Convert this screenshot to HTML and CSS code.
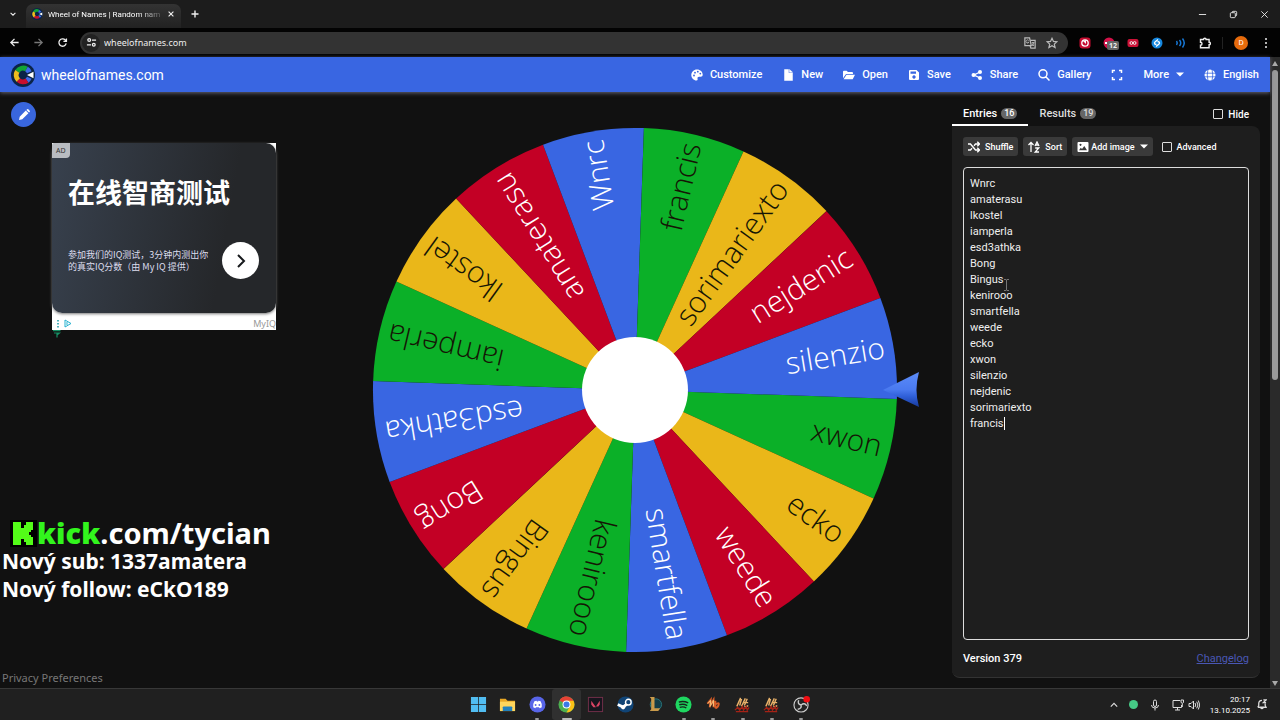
FILE: index.html
```html
<!DOCTYPE html>
<html lang="en">
<head>
<meta charset="utf-8">
<title>Wheel of Names | Random name picker</title>
<link rel="stylesheet" href="styles.css">
</head>
<body>
<svg class="defs" aria-hidden="true">
  <symbol id="logo" viewBox="0 0 24 24">
    <circle cx="12" cy="12" r="12" fill="#0b2447"/>
    <g fill="none" stroke-width="5">
      <path d="M6.300 8.300A6.900 6.900 0 0 1 15.500 6" stroke="#12a537"/>
      <path d="M15.500 6A6.900 6.900 0 0 1 18.300 9.200M18.300 14.800A6.900 6.900 0 0 1 16 17.600" stroke="#3d6be8"/>
      <path d="M16 17.600A6.900 6.900 0 0 1 7.300 17" stroke="#c80f2e"/>
      <path d="M7.300 17A6.900 6.900 0 0 1 6.300 8.300" stroke="#efbd1d"/>
    </g>
    <path d="M16 12l6.500-3.200v6.400z" fill="#fff"/>
  </symbol>
  <symbol id="flame" viewBox="0 0 18 18">
    <path d="M3 11L7 2M6 10L8 3M8 11l4-8.500M11 10l3-7M10 7h5M11 11q2 1 4-1" fill="none" stroke="#e9b26a" stroke-width="1.500"/>
    <path d="M1 15l3-3 2 3 3-4 1 4 3-4 1 4 2-3M2 16.500h13M3 13h10" stroke="#a52216" stroke-width="1.300" fill="none"/>
  </symbol>
</svg>

<header class="tabstrip">
  <button class="plain tab-search" aria-label="Search tabs"><svg viewBox="0 0 10 10" width="8" height="8"><path d="M2 3.500l3 3 3-3" class="line"/></svg></button>
  <div class="tab">
    <svg width="12" height="12"><use href="#logo"/></svg>
    <span class="tab-title">Wheel of Names | Random nam</span>
    <button class="plain" aria-label="Close tab"><svg viewBox="0 0 10 10" width="8" height="8"><path d="M2 2l6 6M8 2l-6 6" class="line"/></svg></button>
  </div>
  <button class="plain new-tab" aria-label="New tab"><svg viewBox="0 0 10 10" width="10" height="10"><path d="M5 1.500v7M1.500 5h7" class="line"/></svg></button>
  <div class="window-controls">
    <button class="plain" aria-label="Minimize"><svg viewBox="0 0 10 10" width="9" height="9"><path d="M1 5h8" class="line thin"/></svg></button>
    <button class="plain" aria-label="Restore"><svg viewBox="0 0 10 10" width="9" height="9"><rect x="1.500" y="3" width="5.500" height="5.500" rx="1" class="line thin"/><path d="M3.500 3V2.500q0-1 1-1h3q1 0 1 1v3q0 1-1 1H7" class="line thin"/></svg></button>
    <button class="plain" aria-label="Close"><svg viewBox="0 0 10 10" width="9" height="9"><path d="M1.500 1.500l7 7M8.500 1.500l-7 7" class="line thin"/></svg></button>
  </div>
</header>

<div class="toolbar">
  <div class="nav-buttons">
    <button class="plain" aria-label="Back"><svg viewBox="0 0 12 12" width="11" height="11"><path d="M10.500 6h-8.500M6 2l-4 4 4 4" class="line"/></svg></button>
    <button class="plain dim" aria-label="Forward"><svg viewBox="0 0 12 12" width="11" height="11"><path d="M1.500 6h8.500M6 2l4 4-4 4" class="line"/></svg></button>
    <button class="plain" aria-label="Reload"><svg viewBox="0 0 12 12" width="11" height="11"><path d="M10 7A4 4 0 1 1 9 3.300L10.200 4.500M10.300 1.500v3.200H7" class="line"/></svg></button>
  </div>
  <div class="address">
    <button class="plain site-info" aria-label="Site information"><svg viewBox="0 0 12 12" width="11" height="11"><circle cx="3.500" cy="3.300" r="1.500" class="line"/><circle cx="8.500" cy="8.500" r="1.500" class="line"/><path d="M6.500 3.300H11M1 8.500h4.500" class="line"/></svg></button>
    <input class="url" aria-label="Address" value="wheelofnames.com">
    <button class="plain dim2" aria-label="Translate"><svg viewBox="0 0 14 14" width="12" height="12"><path d="M1 1h5.500l2 9H1z" class="line"/><path d="M7.500 4H13v9H8l-1-3" class="line"/><path d="M5.500 4a1.800 1.800 0 1 0 .2 2.200H4M9 6.500h3M10.500 6v1M9.500 10.500l2-4M9.500 7.500l2 3" class="line thin"/></svg></button>
    <button class="plain dim2" aria-label="Bookmark"><svg viewBox="0 0 14 14" width="12" height="12"><path d="M7 1.500l1.700 3.700 4 .4-3 2.700.9 4L7 10.200l-3.600 2.100.9-4-3-2.700 4-.4z" class="line"/></svg></button>
  </div>
  <div class="extensions">
    <button class="plain" aria-label="Blocker"><svg viewBox="0 0 12 12" width="12" height="12"><rect x=".5" y=".5" width="11" height="11" rx="3" fill="#c60d31"/><circle cx="6" cy="6" r="3.200" fill="none" stroke="#fff" stroke-width="1.300"/><path d="M4 4l3 3V3z" fill="#fff"/></svg></button>
    <button class="plain badge-host" aria-label="Ad filter"><svg viewBox="0 0 12 12" width="12" height="12"><circle cx="6" cy="6" r="5.500" fill="#d31148"/><path d="M2 6h8" stroke="#fff" stroke-width="2" stroke-dasharray="2 1"/></svg><span class="badge">12</span></button>
    <button class="plain" aria-label="Recorder"><svg viewBox="0 0 12 12" width="12" height="12"><rect x=".5" y="2" width="11" height="8" rx="2" fill="#cc1237"/><circle cx="4.400" cy="6" r="1.400" class="line thin"/><circle cx="7.600" cy="6" r="1.400" class="line thin"/></svg></button>
    <button class="plain" aria-label="Shazam"><svg viewBox="0 0 12 12" width="12" height="12"><circle cx="6" cy="6" r="5.500" fill="#1688df"/><path d="M7 2.500L4 5a1.200 1.200 0 0 0 1.500 2M5 9.500L8 7a1.200 1.200 0 0 0-1.500-2" fill="none" stroke="#fff" stroke-width="1.300"/></svg></button>
    <button class="plain" aria-label="Volume"><svg viewBox="0 0 12 12" width="12" height="12"><path d="M1.500 4q1.500 2 0 4M4.500 3q2.500 3 0 6M7.500 1.500q3.500 4.500 0 9" fill="none" stroke="#1778d6" stroke-width="1.500"/></svg></button>
    <button class="plain" aria-label="Extensions"><svg viewBox="0 0 12 12" width="12" height="12"><path d="M1.500 2.500h3a1.300 1.300 0 0 1 2.600 0h3v2.700a1.300 1.300 0 0 1 0 2.600v3H1.500V8.200a1.500 1.500 0 0 0 0-3z" class="line"/></svg></button>
  </div>
  <button class="avatar" aria-label="Profile">D</button>
  <button class="plain" aria-label="Menu"><svg viewBox="0 0 4 12" width="4" height="12" fill="#eee"><circle cx="2" cy="2" r="1"/><circle cx="2" cy="6" r="1"/><circle cx="2" cy="10" r="1"/></svg></button>
</div>

<div class="viewport">
  <div class="site">
    <header class="site-header">
      <a class="brand" href="#"><svg width="24" height="24"><use href="#logo"/></svg>wheelofnames.com</a>
      <nav class="menu">
        <button><svg viewBox="0 0 12 12" width="12" height="12"><path d="M6 .5C2.700.5.300 3 .3 6S2.800 11.500 5.500 11.500c1.500 0 1.200-1.200 1-2-.2-1 .5-1.700 1.500-1.700h1.700c1.300 0 2-.9 2-2C11.700 2.800 9.300.5 6 .5z" fill="#fff"/><g fill="#3764df"><circle cx="3" cy="6.500" r=".9"/><circle cx="4" cy="3.700" r=".9"/><circle cx="6.800" cy="2.700" r=".9"/><circle cx="9.300" cy="4.600" r=".9"/></g></svg>Customize</button>
        <button><svg viewBox="0 0 12 12" width="12" height="12"><path d="M2.500.500h4V4H10.500v7.500h-8zM7.500.500l3 2.700h-3z" fill="#fff" stroke="#fff" stroke-width=".5"/></svg>New</button>
        <button><svg viewBox="0 0 13 12" width="12" height="12"><path d="M0 9.500V2.500Q0 1.500 1 1.500h3l1.300 1.300h4.500q1 0 1 1V5H3.300zM.6 10.500L3.800 5.800H13L10.500 10.500z" fill="#fff"/></svg>Open</button>
        <button><svg viewBox="0 0 12 12" width="12" height="12"><path fill-rule="evenodd" d="M2 1h6.500L11 3.500V10q0 1-1 1H2q-1 0-1-1V2q0-1 1-1zM2.500 2.500v2.300h5.500V2.500zM6 6.300a1.700 1.700 0 1 0 .01 0z" fill="#fff"/></svg>Save</button>
        <button><svg viewBox="0 0 12 12" width="12" height="12" fill="#fff"><path d="M9 3L3 6l6 3" fill="none" stroke="#fff" stroke-width="1.300"/><circle cx="2.600" cy="6" r="2.100"/><circle cx="9" cy="2.900" r="2"/><circle cx="9" cy="9.100" r="2"/></svg>Share</button>
        <button><svg viewBox="0 0 12 12" width="12" height="12"><path d="M7.800 7.800l3.700 3.700M9 4.800a4 4 0 1 1-8 0 4 4 0 0 1 8 0z" fill="none" stroke="#fff" stroke-width="1.500"/></svg>Gallery</button>
        <button aria-label="Fullscreen"><svg viewBox="0 0 12 12" width="12" height="12"><path d="M1.500 4V1.500H4M8 1.500h2.500V4M10.500 8v2.500H8M4 10.500H1.500V8" fill="none" stroke="#fff" stroke-width="1.500"/></svg></button>
        <button>More<svg viewBox="0 0 8 5" width="8" height="5"><path d="M0 .5h8L4 4.500z" fill="#fff"/></svg></button>
        <button><svg viewBox="0 0 12 12" width="12" height="12"><circle cx="6" cy="6" r="5.500" fill="#fff"/><path d="M0 4.200h12M0 7.800h12M4 0q-1.500 6 0 12M8 0q1.500 6 0 12" fill="none" stroke="#3764df" stroke-width=".8"/></svg>English</button>
      </nav>
    </header>

    <main class="content">
      <aside class="left">
        <button class="edit" aria-label="Edit title"><svg viewBox="0 0 14 14" width="14" height="14"><path d="M2 12l.7-3.300L8.800 2.600l2.600 2.600-6.100 6.100zM9.400 2l.7-.7q.6-.5 1.200 0l1.400 1.400q.5.600 0 1.200l-.7.700z" fill="#fff"/></svg></button>
        <section class="ad">
          <div class="ad-card">
            <span class="ad-label">AD</span>
            <h2>在线智商测试</h2>
            <div class="ad-row">
              <p>参加我们的IQ测试，3分钟内测出你<br>的真实IQ分数（由 My IQ 提供）</p>
              <button class="ad-go" aria-label="Open ad"><svg viewBox="0 0 16 16" width="16" height="18"><path d="M5 2l6 6-6 6" fill="none" stroke="#17191c" stroke-width="2"/></svg></button>
            </div>
          </div>
          <div class="ad-foot">
            <svg viewBox="0 0 18 9" width="18" height="9"><path d="M2 1v1.500M2 4v1.500M2 7v1.500" stroke="#159ba8" stroke-width="1.500"/><path d="M9 1v7l6-3.500zM11 3v3" fill="none" stroke="#25b1cf"/></svg>
            <span>MyIQ</span>
          </div>
          <svg class="ad-mark" viewBox="0 0 8 8" width="8" height="8"><path d="M0 .7h7.500M1 3h5.500L4 5M4 3v4.500" fill="none" stroke="#159064" stroke-width="1.200"/></svg>
        </section>
        <a class="privacy" href="#">Privacy Preferences</a>
      </aside>

      <section class="stage">
        <svg class="wheel" viewBox="-290 -265 580 530" role="img" aria-label="Wheel">
          <defs>
            <path id="slice" d="M0 0L257 -51.100A262 262 0 0 1 257 51.100Z"/>
            <linearGradient id="arrow" x1="0" y1="0" x2="0" y2="1"><stop offset="0" stop-color="#5c8cf8"/><stop offset=".5" stop-color="#4a7af0"/><stop offset=".7" stop-color="#2f5fd8"/><stop offset="1" stop-color="#173a9c"/></linearGradient>
          </defs>
          <g class="green" transform="rotate(13.200)"><use href="#slice"/><text x="253" y="9">xwon</text></g>
          <g class="yellow" transform="rotate(35.700)"><use href="#slice"/><text x="253" y="9">ecko</text></g>
          <g class="red" transform="rotate(58.200)"><use href="#slice"/><text x="253" y="9">weede</text></g>
          <g class="blue" transform="rotate(80.700)"><use href="#slice"/><text x="253" y="9">smartfella</text></g>
          <g class="green" transform="rotate(103.200)"><use href="#slice"/><text x="253" y="9">kenirooo</text></g>
          <g class="yellow" transform="rotate(125.700)"><use href="#slice"/><text x="253" y="9">Bingus</text></g>
          <g class="red" transform="rotate(148.200)"><use href="#slice"/><text x="253" y="9">Bong</text></g>
          <g class="blue" transform="rotate(170.700)"><use href="#slice"/><text x="253" y="9">esd3athka</text></g>
          <g class="green" transform="rotate(193.200)"><use href="#slice"/><text x="253" y="9">iamperla</text></g>
          <g class="yellow" transform="rotate(215.700)"><use href="#slice"/><text x="253" y="9">lkostel</text></g>
          <g class="red" transform="rotate(238.200)"><use href="#slice"/><text x="253" y="9">amaterasu</text></g>
          <g class="blue" transform="rotate(260.700)"><use href="#slice"/><text x="253" y="9">Wnrc</text></g>
          <g class="green" transform="rotate(283.200)"><use href="#slice"/><text x="253" y="9">francis</text></g>
          <g class="yellow" transform="rotate(305.700)"><use href="#slice"/><text x="253" y="9">sorimariexto</text></g>
          <g class="red" transform="rotate(328.200)"><use href="#slice"/><text x="253" y="9">nejdenic</text></g>
          <g class="blue" transform="rotate(350.700)"><use href="#slice"/><text x="253" y="9">silenzio</text></g>
          <circle r="53" fill="#fff"/>
          <path d="M248 0L284 -18Q279 0 284 17Z" fill="url(#arrow)"/>
        </svg>
      </section>

      <aside class="panel">
        <div class="tabs">
          <button class="panel-tab active">Entries <span class="count">16</span></button>
          <button class="panel-tab">Results <span class="count">19</span></button>
          <label class="check hide"><input type="checkbox">Hide</label>
        </div>
        <div class="card">
          <div class="tools">
            <button class="tool"><svg viewBox="0 0 12 12" width="12" height="12"><path d="M0 3h2.500l5 6H11M0 9h2.500L4 7.300M6 4.700L7.500 3H11M9.300.8L11.500 3 9.300 5.200M9.300 6.800L11.500 9 9.300 11.200" fill="none" stroke="#fff" stroke-width="1.400"/></svg>Shuffle</button>
            <button class="tool"><svg viewBox="0 0 12 12" width="12" height="12"><path d="M3 11V1.500M.5 4L3 1.500 5.500 4M7 5l2-4 2 4M7.700 4h2.600M7.200 7h3.500L7.200 11H11" fill="none" stroke="#fff" stroke-width="1.300"/></svg>Sort</button>
            <button class="tool image"><svg viewBox="0 0 12 12" width="12" height="12"><path fill-rule="evenodd" d="M1.500 1h9q1 0 1 1v8q0 1-1 1h-9q-1 0-1-1V2q0-1 1-1zM2 9.300h8L7.300 5 5 8 3.800 6.700zM3.500 2.700a1 1 0 1 0 .01 0z" fill="#fff"/></svg>Add image<svg viewBox="0 0 8 5" width="8" height="5"><path d="M0 .5h8L4 4.500z" fill="#fff"/></svg></button>
            <label class="check advanced"><input type="checkbox">Advanced</label>
          </div>
          <div class="entries-wrap">
            <textarea class="entries" aria-label="Entries" spellcheck="false">Wnrc
amaterasu
lkostel
iamperla
esd3athka
Bong
Bingus
kenirooo
smartfella
weede
ecko
xwon
silenzio
nejdenic
sorimariexto
francis</textarea>
            <span class="caret"></span>
            <svg class="pointer" viewBox="0 0 5 12" width="5" height="12"><path d="M0 .5h2l.5.5.5-.5h2M2.500 1v10M0 11.500h2l.5-.5.5.5h2" fill="none" stroke="#777"/></svg>
          </div>
          <footer class="card-foot"><span>Version 379</span><a href="#">Changelog</a></footer>
        </div>
      </aside>
    </main>

    <div class="stream">
      <div class="kick"><svg viewBox="0 0 27 27" width="27" height="27"><path d="M0 0h27v27H0z" fill="#000"/><path d="M3 2h8v6h3V5h2V2h7v8h-2v2h-2v3h2v2h2v8h-7v-3h-2v-3h-3v6H3z" fill="#53fc18"/></svg><b>kick</b>.com/tycian</div>
      <div>Nový sub: 1337amatera</div>
      <div>Nový follow: eCkO189</div>
    </div>
  </div>
  <div class="scrollbar"><svg viewBox="0 0 6 5" width="6" height="5"><path d="M0 5h6L3 0z" fill="#aaa"/></svg><div class="track"><div class="thumb"></div></div><svg viewBox="0 0 6 5" width="6" height="5"><path d="M0 0h6L3 5z" fill="#aaa"/></svg></div>
</div>

<footer class="taskbar">
  <div></div>
  <div class="apps">
    <button aria-label="Start"><svg viewBox="0 0 18 18"><path d="M1 1h7.700v7.700H1zM9.500 1H17v7.700H9.500zM1 9.500h7.700V17H1zM9.500 9.500H17V17H9.500z" fill="#51bdf1"/></svg></button>
    <button aria-label="Files"><svg viewBox="0 0 18 18"><path d="M1 3h6l2 2h8v11H1z" fill="#e9a825"/><path d="M1 6h16v10H1z" fill="#ffd65c"/><path d="M4 16v-4q0-1 1-1h8q1 0 1 1v4z" fill="#2281bd"/></svg></button>
    <button class="running" aria-label="Discord"><svg viewBox="0 0 18 18"><circle cx="9" cy="9" r="8.500" fill="#5865e8"/><path d="M4.500 12q-.5-4 1.200-6.500L8 5l.4.800h1.200L10 5l2.300.5Q14 8 13.500 12l-2.200 1-.7-1H7.400l-.7 1z" fill="#fff"/><circle cx="7" cy="9.500" r="1" fill="#5865e8"/><circle cx="11" cy="9.500" r="1" fill="#5865e8"/></svg></button>
    <button class="running current" aria-label="Chrome"><svg viewBox="0 0 18 18"><circle cx="9" cy="9" r="8.500" fill="#4caf50"/><path d="M9 9L1.700 4.700A8.500 8.500 0 0 1 16.400 5z" fill="#e64235"/><path d="M9 5h7.400A8.500 8.500 0 0 1 9 17.500L12.500 11z" fill="#fbc116"/><path d="M1.700 4.700A8.500 8.500 0 0 1 9 .5V5z" fill="#e64235"/><circle cx="9" cy="9" r="4.200" fill="#fff"/><circle cx="9" cy="9" r="3.200" fill="#3c79e6"/></svg></button>
    <button aria-label="Valorant"><svg viewBox="0 0 18 18"><rect x="1.500" y="1.500" width="15" height="15" fill="#17151d" stroke="#73304a"/><path d="M4.500 5l5 7h-2.700l-2.300-3zM13.500 5v4l-1.500 2h-2.500z" fill="#dc4464"/></svg></button>
    <button aria-label="Steam"><svg viewBox="0 0 18 18"><circle cx="9" cy="9" r="8.500" fill="#104476"/><path d="M.8 9l5.700 2.800L11 8" stroke="#fff" stroke-width="3" fill="none"/><circle cx="12" cy="6.500" r="3" fill="#104476" stroke="#fff" stroke-width="1.500"/><circle cx="6.500" cy="12" r="2.200" fill="#fff"/></svg></button>
    <button aria-label="League"><svg viewBox="0 0 18 18"><circle cx="10.500" cy="9" r="6" fill="#123d48" stroke="#28767b"/><path d="M4 1h5v12h6l-2 3H4l1.500-2V3z" fill="#c99b4b"/></svg></button>
    <button class="running" aria-label="Spotify"><svg viewBox="0 0 18 18"><circle cx="9" cy="9" r="8.500" fill="#1ed760"/><path d="M4 6.500q5-1.700 10 .8M4.500 9.300q4.500-1.400 8.500.8M5 12q4-1.200 7 .7" fill="none" stroke="#14271b" stroke-width="1.500"/></svg></button>
    <button class="running" aria-label="Metin launcher"><svg viewBox="0 0 18 18"><path d="M2.500 8L6 4 5 12M5.500 10L9 4v8M11 5v8M11 9q4-3 3.500 0t-3.500 4" fill="none" stroke="#d85d27" stroke-width="2"/><path d="M3 8l3-3.500L5.500 11 9 4.500V11" fill="none" stroke="#f2c37c"/></svg></button>
    <button class="running" aria-label="Metin"><svg viewBox="0 0 18 18"><use href="#flame"/></svg></button>
    <button class="running" aria-label="Metin second window"><svg viewBox="0 0 18 18"><use href="#flame"/></svg></button>
    <button class="running" aria-label="OBS"><svg viewBox="0 0 18 18"><circle cx="8.500" cy="9.500" r="7.500" fill="#242424" stroke="#ccc" stroke-width="1.200"/><path d="M8.500 9.500q-4-1-2.500-5M8.500 9.500q1 4-3.500 4.500M8.500 9.500q4-3 6 1" fill="none" stroke="#ccc" stroke-width="1.500"/><circle cx="14.500" cy="3.500" r="3.500" fill="#f20d12"/></svg></button>
  </div>
  <div class="tray">
    <svg viewBox="0 0 10 10" width="8" height="8"><path d="M1 7l4-4 4 4" class="line"/></svg>
    <span class="dot"></span>
    <svg viewBox="0 0 12 12" width="12" height="12"><path d="M4.500 2.500a1.500 1.500 0 0 1 3 0v3.500a1.500 1.500 0 0 1-3 0zM2.500 6q0 3 3.500 3t3.500-3M6 9v2.500" class="line thin"/></svg>
    <div class="net"><svg viewBox="0 0 12 12" width="12" height="12"><path d="M8 1.500H1v7h8.500V6M3 11h5M5.500 8.500V11M9 1h2.500v2.500q-1 1.500-2.500 0zM10.300 4.500V8" class="line thin"/></svg><svg viewBox="0 0 12 12" width="12" height="12"><path d="M1 4.500h2L5.500 2v8L3 7.500H1zM7 4q1.500 2 0 4M8.700 2.700q2.500 3.300 0 6.600M10.300 1.500q3 4.500 0 9" class="line thin"/></svg></div>
    <div class="clock">20:17<br>13.10.2025</div>
    <svg viewBox="0 0 12 12" width="11" height="11"><path d="M2 9h9L10 7V5M6.500 1.500Q3 1.500 3 5v2L2 9M5 9.500q1.500 2 3 0M8 1h3L8 4h3" class="line"/></svg>
  </div>
</footer>
</body>
</html>
```

FILE: styles.css
```css
* { box-sizing: border-box; }
body {
  margin: 0;
  height: 100vh;
  display: flex;
  flex-direction: column;
  overflow: hidden;
  background: #111;
  color: #fff;
  font: 11px Roboto, sans-serif;
}
button { font: inherit; color: inherit; border: 0; background: none; padding: 0; cursor: pointer; }
svg { display: block; flex: none; }
.defs { position: absolute; width: 0; height: 0; }
.line { fill: none; stroke: currentColor; stroke-width: 1.4; }
.thin { stroke-width: 1; }
.plain { display: flex; align-items: center; justify-content: center; color: #eee; }
.dim { color: #777; }
.dim2 { color: #bbb; }

/* Browser frame */
.tabstrip { height: 28px; flex: none; display: flex; align-items: center; background: #1c1c1c; font-size: 9px; }
.tab-search { width: 26px; }
.tab { flex: none; width: 155px; height: 24px; margin-top: 4px; padding: 0 6px 4px 5px; display: flex; align-items: center; gap: 5px; background: linear-gradient(#333, #222); border-radius: 7px 7px 0 0; }
.tab-title { flex: 1; min-width: 0; margin-right: -5px; white-space: nowrap; font-size: 8px; }
.tab-title { -webkit-mask-image: linear-gradient(90deg, #000 75%, transparent); mask-image: linear-gradient(90deg, #000 75%, transparent); }
.new-tab { width: 27px; }
.window-controls { margin-left: auto; display: flex; }
.window-controls .plain { width: 31px; }
.toolbar { height: 29px; flex: none; display: flex; align-items: center; background: #030303; padding: 0 12px 0 9px; }
.nav-buttons { display: flex; gap: 13px; width: 71px; }
.address { flex: 1; height: 22px; display: flex; align-items: center; gap: 10px; padding: 0 10px 0 2px; background: #333; border-radius: 11px; }
.site-info { width: 18px; height: 18px; border-radius: 50%; background: #222; }
.url { flex: 1; min-width: 0; margin-left: -6px; padding: 0; border: 0; background: none; color: #eee; font: 9px "Noto Sans", sans-serif; outline: 0; }
.extensions { display: flex; gap: 12px; padding: 0 11px; border-right: 1px solid #222; }
.badge-host { position: relative; }
.badge { position: absolute; left: 4px; top: 4px; padding: 0 2px; border-radius: 2px; background: #666; font: bold 7px/9px "Noto Sans", sans-serif; }
.avatar { width: 14px; height: 14px; margin: 0 16px 0 11px; border-radius: 50%; background: #e66b0c; font-size: 8px; }

/* Site */
.viewport { flex: 1; min-height: 0; display: flex; }
.site { flex: 1; min-width: 0; position: relative; display: flex; flex-direction: column; }
.site-header { height: 35px; flex: none; display: flex; align-items: center; justify-content: space-between; padding: 0 11px; background: #3966e2; box-shadow: 0 1px 4px #667; }
.brand { display: flex; align-items: center; gap: 6px; color: #fff; font-size: 14px; text-decoration: none; }
.menu { display: flex; gap: 20px; font-weight: 500; }
.menu button { display: flex; align-items: center; gap: 7px; }
.content { flex: 1; min-height: 0; display: grid; grid-template-columns: 318px 1fr 308px; padding-right: 10px; }
.left { display: flex; flex-direction: column; align-items: flex-start; padding: 10px 0 2px; }
.edit { width: 25px; height: 25px; margin-left: 11px; display: grid; place-items: center; border-radius: 50%; background: #3966dd; }
.ad { position: relative; width: 224px; margin: 16px 0 0 52px; background: #fff; font-family: "Noto Sans", "Noto Sans CJK SC", sans-serif; }
.ad-card { position: relative; height: 170px; padding: 29px 17px 0 16px; border-radius: 10px; background: linear-gradient(100deg, #38414e, #25272a 75%); box-shadow: 0 1px 3px #777; }
.ad-label { position: absolute; left: 0; top: 0; padding: 0 4px; border-radius: 2px 0 4px; background: #b9bcc1; color: #333; font: 7px/15px "Noto Sans", sans-serif; }
.ad h2 { margin: 0; font: bold 27px/40px "Noto Sans CJK SC", sans-serif; white-space: nowrap; }
.ad-row { display: flex; align-items: center; justify-content: space-between; margin-top: 30px; }
.ad p { margin: 0; font: 9px/12px "Noto Sans CJK SC", sans-serif; color: #dde; white-space: nowrap; }
.ad-go { width: 37px; height: 37px; border-radius: 50%; background: #fff; display: grid; place-items: center; }
.ad-foot { height: 17px; padding: 3px 0 0 4px; display: flex; align-items: center; justify-content: space-between; color: #999; font-size: 9px; }
.ad-mark { position: absolute; left: 1px; top: 100%; }
.privacy { margin: auto 0 0 2px; color: #777; font: 11px/16px "Noto Sans", sans-serif; text-decoration: none; }
.stage { display: grid; place-items: center; min-width: 0; }
.wheel { width: 580px; max-width: 100%; }
.wheel text { font: 360 30px "Open Sans", sans-serif; text-anchor: end; }
.green { fill: #0bb028; }
.yellow { fill: #eab719; }
.red { fill: #c30025; }
.blue { fill: #3966e2; }
.wheel text { fill: #fff; }
.wheel .green text, .wheel .yellow text { fill: #151505; }

.panel { display: flex; flex-direction: column; padding: 10px 0 10px; }
.tabs { display: flex; align-items: center; height: 24px; }
.panel-tab { height: 24px; padding: 0 11px; display: flex; align-items: center; gap: 4px; font-weight: 500; border-bottom: 2px solid transparent; color: #ddd; }
.panel-tab.active { border-color: #fff; color: #fff; }
.count { padding: 0 3px; border-radius: 6px; background: #666; font-size: 9px; line-height: 11px; }
.check { display: flex; align-items: center; gap: 5px; font-weight: 500; }
.check input { appearance: none; width: 10px; height: 10px; margin: 0; border: 1px solid #ddd; border-radius: 1px; }
.hide { margin-left: auto; padding-right: 11px; font-size: 10px; }
.card { flex: 1; min-height: 0; display: flex; flex-direction: column; padding: 11px 11px 0; background: #1e1e1e; border: solid #333; border-width: 0 0 1px; border-radius: 0 8px 8px; }
.tools { display: flex; align-items: center; gap: 5px; font-size: 9px; font-weight: 500; }
.tool { height: 19px; padding: 0 5px; display: flex; align-items: center; gap: 5px; border-radius: 3px; background: #3a3a3a; }
.tool.image { gap: 2px; }
.tool.image svg:last-child { margin-left: 3px; }
.advanced { margin-left: 4px; }
.entries-wrap { flex: 1; min-height: 0; position: relative; margin-top: 11px; }
.entries { display: block; width: 100%; height: 100%; padding: 8px 6px; resize: none; outline: 0; border: 1px solid #ddd; border-radius: 4px; background: #1e1e1e; color: #eee; font: 11px/16px Roboto, sans-serif; }
.caret { position: absolute; left: 41px; top: 250px; width: 1px; height: 13px; background: #fff; }
.pointer { position: absolute; left: 41px; top: 112px; }
.card-foot { height: 37px; display: flex; align-items: center; justify-content: space-between; font-weight: 500; }
.card-foot a { color: #4a57b5; font-weight: 400; }
.stream { position: absolute; left: 2px; top: 462px; font: bold 21px/28px "Noto Sans", sans-serif; white-space: nowrap; }
.kick { display: flex; align-items: center; padding-left: 8px; font-size: 29px; }
.kick b { color: #32f51d; }
.scrollbar { width: 10px; padding: 4px 0 2px; display: flex; flex-direction: column; align-items: center; gap: 4px; background: #2a2a2a; }
.track { flex: 1; }
.thumb { width: 6px; height: 51%; border-radius: 3px; background: #999; }

/* Taskbar */
.taskbar { height: 32px; flex: none; display: grid; grid-template-columns: 1fr 352px 1fr; background: #202020; border-top: 1px solid #383838; }
.apps { display: grid; grid-template-columns: repeat(12, 1fr); }
.apps button { position: relative; display: grid; place-items: center; border-radius: 3px; }
.apps svg { width: 17px; height: 17px; }
.apps .current { background: #303030; }
.running::after { content: ""; position: absolute; left: 50%; bottom: 0; width: 4px; height: 2px; margin-left: -2px; border-radius: 1px; background: #999; }
.running.current::after { width: 10px; margin-left: -5px; background: #bbb; }
.tray { display: flex; align-items: center; justify-content: flex-end; gap: 11px; padding-right: 13px; color: #ddd; }
.dot { width: 9px; height: 9px; border-radius: 50%; background: #46ca86; }
.net { display: flex; gap: 4px; }
.clock { margin: 0 -5px 0 -1px; text-align: right; font: 8px/11px Roboto, sans-serif; color: #fff; }
```
